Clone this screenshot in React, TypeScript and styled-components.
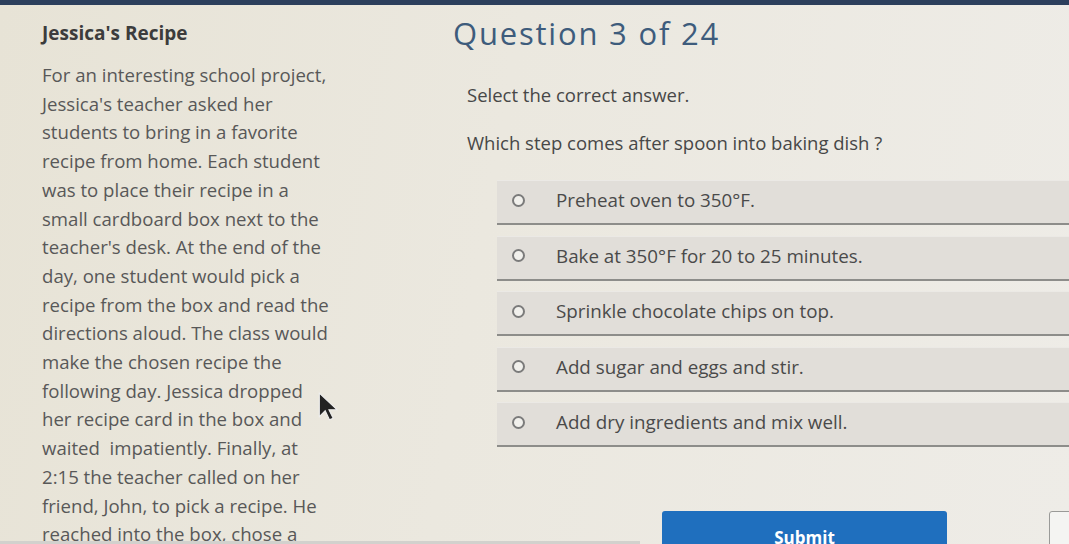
import React from 'react';
import styled, { createGlobalStyle } from 'styled-components';

const GlobalStyle = createGlobalStyle`
  html, body {
    margin: 0;
    padding: 0;
    background: #ebe9e3;
  }
  * {
    box-sizing: border-box;
  }
`;

const passage = [
  'For an interesting school project,',
  "Jessica's teacher asked her",
  'students to bring in a favorite',
  'recipe from home. Each student',
  'was to place their recipe in a',
  'small cardboard box next to the',
  "teacher's desk. At the end of the",
  'day, one student would pick a',
  'recipe from the box and read the',
  'directions aloud. The class would',
  'make the chosen recipe the',
  'following day. Jessica dropped',
  'her recipe card in the box and',
  'waited  impatiently. Finally, at',
  '2:15 the teacher called on her',
  'friend, John, to pick a recipe. He',
  'reached into the box, chose a',
];

const answers = [
  'Preheat oven to 350°F.',
  'Bake at 350°F for 20 to 25 minutes.',
  'Sprinkle chocolate chips on top.',
  'Add sugar and eggs and stir.',
  'Add dry ingredients and mix well.',
];

const Page = styled.div`
  position: relative;
  width: 1069px;
  height: 544px;
  overflow: hidden;
  font-family: 'Open Sans', 'Liberation Sans', sans-serif;
  background: linear-gradient(100deg, #e7e3d6 0%, #ebe8df 45%, #eeece7 100%);
  border-top: 5px solid #2c3f5c;
  display: grid;
  grid-template-columns: 453px 1fr;
`;

const Passage = styled.section`
  padding: 16px 0 0 42px;
  color: #585858;
`;

const PassageTitle = styled.h2`
  margin: 0 0 16px;
  font-size: 19px;
  font-weight: 700;
  color: #3c3c3c;
  line-height: 24px;
`;

const PassageLine = styled.div`
  font-size: 18.6px;
  line-height: 28.7px;
  white-space: pre;
`;

const Quiz = styled.section`
  padding-top: 10px;
  display: flex;
  flex-direction: column;
`;

const QuizHeader = styled.h1`
  margin: 0;
  font-size: 31px;
  font-weight: 400;
  line-height: 36px;
  color: #3e5c7c;
  letter-spacing: 1.8px;
`;

const Prompt = styled.p<{ $top: number }>`
  margin: ${(p) => p.$top}px 0 0 14px;
  font-size: 18.5px;
  line-height: 24px;
  color: #474747;
`;

const AnswerList = styled.div`
  margin: 25px 0 0 44px;
  display: flex;
  flex-direction: column;
  gap: 10.5px;
`;

const AnswerRow = styled.label`
  display: flex;
  align-items: center;
  height: 45px;
  padding: 0 0 4px 15px;
  background: #e1ded9;
  border-top: 1px solid #ebe9e5;
  border-bottom: 2px solid #8d8d8a;
  font-size: 18.8px;
  color: #4a4a4a;
`;

const Radio = styled.span`
  width: 13px;
  height: 13px;
  border-radius: 50%;
  border: 2px solid #7b7b7b;
  background: #f1f0ec;
  margin-right: 31px;
  flex-shrink: 0;
`;

const Actions = styled.div`
  margin-top: 64px;
  display: flex;
  align-items: flex-start;
`;

const SubmitButton = styled.button`
  margin-left: 209px;
  width: 285px;
  height: 44px;
  border: none;
  border-radius: 3px 3px 0 0;
  background: #1f6fbe;
  color: #fff;
  font-family: 'Open Sans', 'Liberation Sans', sans-serif;
  font-size: 17px;
  font-weight: 700;
  padding: 10px 0 0;
  line-height: 24px;
  display: block;
  text-align: center;
`;

const SideBox = styled.div`
  margin-left: 102px;
  width: 40px;
  height: 40px;
  background: #f4f4f2;
  border: 1px solid #9a9a98;
  border-radius: 3px;
`;

const Pointer = styled.svg`
  position: absolute;
  left: 316px;
  top: 386px;
  filter: blur(0.5px);
`;

const BottomEdge = styled.div`
  position: absolute;
  left: 0;
  width: 640px;
  bottom: 0;
  height: 3px;
  background: #d2d1cd;
`;

export default function App() {
  return (
    <>
      <GlobalStyle />
      <Page>
        <Passage>
          <PassageTitle>Jessica's Recipe</PassageTitle>
          {passage.map((line, i) => (
            <PassageLine key={i}>{line}</PassageLine>
          ))}
        </Passage>
        <Quiz>
          <QuizHeader>Question 3 of 24</QuizHeader>
          <Prompt $top={32}>Select the correct answer.</Prompt>
          <Prompt $top={24}>Which step comes after spoon into baking dish ?</Prompt>
          <AnswerList>
            {answers.map((a) => (
              <AnswerRow key={a}>
                <Radio />
                {a}
              </AnswerRow>
            ))}
          </AnswerList>
          <Actions>
            <SubmitButton type="button">Submit</SubmitButton>
            <SideBox />
          </Actions>
        </Quiz>
        <Pointer width="28" height="32" viewBox="0 0 26 30">
          <path d="M3 2 L3 24 L8.5 18.5 L12.5 27 L16 25.5 L12 17.5 L19.5 17.5 Z" fill="#222" stroke="#eee" strokeWidth="1" />
        </Pointer>
        <BottomEdge />
      </Page>
    </>
  );
}
